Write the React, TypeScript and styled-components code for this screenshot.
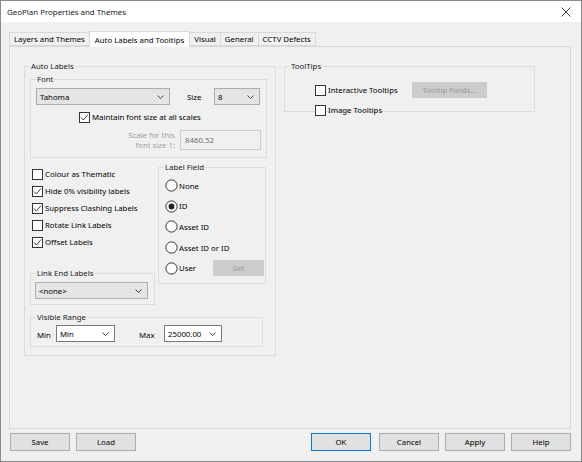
import React from "react";
import styled, { createGlobalStyle } from "styled-components";

const GlobalStyle = createGlobalStyle`
  html, body {
    margin: 0;
    padding: 0;
    background: #ffffff;
  }
  * {
    box-sizing: border-box;
  }
`;

const FONT = `"Noto Sans", "Liberation Sans", Arial, sans-serif`;

const Window = styled.div`
  width: 582px;
  height: 462px;
  display: flex;
  flex-direction: column;
  border: 1px solid #8a8a8a;
  font-family: ${FONT};
  font-size: 7.8px;
  color: #000;
  background: #f0f0f0;
  overflow: hidden;
`;

const TitleBar = styled.div`
  height: 21px;
  flex: none;
  display: flex;
  align-items: center;
  justify-content: space-between;
  padding: 0 6px 0 6px;
  background: #ffffff;
  font-size: 7.9px;
  color: #1a1a1a;
`;

const Body = styled.div`
  flex: 1;
  display: flex;
  flex-direction: column;
  padding: 10px 10px 9px 8px;
`;

const TabStrip = styled.div`
  display: flex;
  align-items: flex-end;
  height: 14px;
  padding-left: 1px;
  position: relative;
  z-index: 1;
`;

const Tab = styled.div<{ $active?: boolean }>`
  height: ${(p) => (p.$active ? "16px" : "14px")};
  display: flex;
  align-items: center;
  padding: 0 ${(p) => (p.$active ? "5px" : "4px")};
  border: 1px solid #d9d9d9;
  border-bottom: ${(p) => (p.$active ? "none" : "1px solid #d9d9d9")};
  margin-left: -1px;
  background: ${(p) => (p.$active ? "#ffffff" : "#f0f0f0")};
  white-space: nowrap;
  margin-bottom: ${(p) => (p.$active ? "-1px" : "0")};
`;

const TabPanel = styled.div`
  height: 383px;
  flex: none;
  border: 1px solid #d9d9d9;
  display: flex;
  align-items: flex-start;
  gap: 8px;
  padding: 14px 0 0 14px;
`;

const Group = styled.fieldset<{ $w?: number; $h?: number }>`
  margin: 0;
  padding: 0;
  width: ${(p) => (p.$w ? `${p.$w}px` : "auto")};
  height: ${(p) => (p.$h ? `${p.$h}px` : "auto")};
  border: 1px solid #dcdcdc;
  min-width: 0;
  display: flex;
  flex-direction: column;
`;

const Legend = styled.legend`
  padding: 0 1px;
  margin-left: 5px;
  line-height: 11px;
  color: #1a1a1a;
`;

const AutoInner = styled.div`
  display: flex;
  flex-direction: column;
  padding: 2px 8px 0 5px;
`;

const FontInner = styled.div`
  display: flex;
  flex-direction: column;
  padding: 3px 5px 0 5px;
`;

const Row = styled.div<{ $gap?: number }>`
  display: flex;
  align-items: center;
  gap: ${(p) => p.$gap ?? 0}px;
`;

const Combo = styled.div<{ $w: number; $editable?: boolean }>`
  width: ${(p) => p.$w}px;
  height: 17px;
  display: flex;
  align-items: center;
  justify-content: space-between;
  padding: 0 5px 0 3px;
  background: ${(p) => (p.$editable ? "#ffffff" : "#e5e5e5")};
  border: 1px solid ${(p) => (p.$editable ? "#7a7a7a" : "#adadad")};
  color: #000;
`;

const Chevron = () => (
  <svg width="7" height="4" viewBox="0 0 7 4">
    <path d="M0.5 0.5 L3.5 3.5 L6.5 0.5" fill="none" stroke="#333" strokeWidth="0.9" />
  </svg>
);

const Plain = styled.span<{ $w?: number; $color?: string }>`
  width: ${(p) => (p.$w ? `${p.$w}px` : "auto")};
  color: ${(p) => p.$color ?? "#000"};
  white-space: nowrap;
`;

const CheckRow = styled.label<{ $ml?: number; $w?: number }>`
  display: flex;
  align-items: center;
  height: 12px;
  width: ${(p) => (p.$w ? `${p.$w}px` : "auto")};
  flex: none;
  margin-left: ${(p) => p.$ml ?? 0}px;
  white-space: nowrap;
`;

const Box = styled.span`
  width: 11px;
  height: 11px;
  flex: none;
  border: 1px solid #333;
  background: #fff;
  display: flex;
  align-items: center;
  justify-content: center;
  margin-right: 2px;
`;

const Check = ({ checked, label, ml, w }: { checked?: boolean; label: string; ml?: number; w?: number }) => (
  <CheckRow $ml={ml} $w={w}>
    <Box>
      {checked && (
        <svg width="9" height="9" viewBox="0 0 9 9">
          <path d="M1 4.5 L3.4 7 L8 1.5" fill="none" stroke="#222" strokeWidth="0.9" />
        </svg>
      )}
    </Box>
    {label}
  </CheckRow>
);

const RadioRow = styled.label`
  display: flex;
  align-items: center;
  height: 13px;
  white-space: nowrap;
`;

const RadioMark = styled.svg`
  margin-right: 1px;
  flex: none;
`;

const Radio = ({ checked, label }: { checked?: boolean; label: string }) => (
  <RadioRow>
    <RadioMark width="13" height="13" viewBox="0 0 13 13">
      <circle cx="6.5" cy="6.5" r="5.6" fill="#fff" stroke="#333" strokeWidth="1" />
      {checked && <circle cx="6.5" cy="6.5" r="2.9" fill="#222" />}
    </RadioMark>
    {label}
  </RadioRow>
);

const TextBox = styled.div`
  width: 81px;
  height: 20px;
  display: flex;
  align-items: center;
  padding-left: 4px;
  background: #f0f0f0;
  border: 1px solid #cccccc;
  color: #6d6d6d;
`;

const ScaleLabel = styled.div`
  width: 144px;
  text-align: right;
  line-height: 10px;
  color: #a0a0a0;
  padding-right: 5px;
`;

const Button = styled.div<{ $w?: number; $disabled?: boolean; $default?: boolean }>`
  width: ${(p) => p.$w ?? 60}px;
  height: ${(p) => (p.$disabled ? 16 : 18)}px;
  display: flex;
  align-items: center;
  justify-content: center;
  background: ${(p) => (p.$disabled ? "#cccccc" : "#e1e1e1")};
  border: 1px solid ${(p) => (p.$disabled ? "#cccccc" : p.$default ? "#0078d7" : "#adadad")};
  color: ${(p) => (p.$disabled ? "#9a9a9a" : "#000")};
  flex: none;
`;

const Middle = styled.div`
  display: flex;
  gap: 3px;
  margin-top: 4px;
`;

const LeftCol = styled.div`
  display: flex;
  flex-direction: column;
  width: 125px;
`;

const CheckList = styled.div`
  display: flex;
  flex-direction: column;
  gap: 5px;
  padding-top: 6px;
`;

const RadioList = styled.div`
  display: flex;
  flex-direction: column;
  gap: 7.7px;
  padding: 6px 0 8px 6px;
`;

const UserRow = styled.div`
  display: flex;
  align-items: center;
  height: 13px;
`;

const GroupPad = styled.div<{ $p: string }>`
  display: flex;
  flex-direction: column;
  padding: ${(p) => p.$p};
`;

const Footer = styled.div`
  display: flex;
  align-items: center;
  gap: 6px;
  margin-top: 4px;
  padding-left: 1px;
`;

const Spacer = styled.div`
  flex: 1;
`;

export default function App() {
  return (
    <>
      <GlobalStyle />
      <Window>
        <TitleBar>
          <span>GeoPlan Properties and Themes</span>
          <svg width="10" height="10" viewBox="0 0 10 10" style={{ marginRight: 4 }}>
            <path d="M0.5 0.5 L9.5 9.5 M9.5 0.5 L0.5 9.5" stroke="#333" strokeWidth="0.9" />
          </svg>
        </TitleBar>
        <Body>
          <TabStrip>
            <Tab>Layers and Themes</Tab>
            <Tab $active>Auto Labels and Tooltips</Tab>
            <Tab>Visual</Tab>
            <Tab>General</Tab>
            <Tab>CCTV Defects</Tab>
          </TabStrip>
          <TabPanel>
            <Group $w={252} $h={295}>
              <Legend>Auto Labels</Legend>
              <AutoInner>
                <Group $h={84}>
                  <Legend>Font</Legend>
                  <FontInner>
                    <Row>
                      <Combo $w={134}>
                        Tahoma
                        <Chevron />
                      </Combo>
                      <Plain $w={27} style={{ marginLeft: 17 }}>
                        Size
                      </Plain>
                      <Combo $w={46}>
                        8
                        <Chevron />
                      </Combo>
                    </Row>
                    <Row style={{ marginTop: 6 }}>
                      <Check checked label="Maintain font size at all scales" ml={43} />
                    </Row>
                    <Row style={{ marginTop: 7 }}>
                      <ScaleLabel>
                        Scale for this
                        <br />
                        font size 1:
                      </ScaleLabel>
                      <TextBox>8460.52</TextBox>
                    </Row>
                  </FontInner>
                </Group>
                <Middle>
                  <LeftCol>
                    <CheckList>
                      <Check label="Colour as Thematic" ml={2} />
                      <Check checked label="Hide 0% visibility labels" ml={2} />
                      <Check checked label="Suppress Clashing Labels" ml={2} />
                      <Check label="Rotate Link Labels" ml={2} />
                      <Check checked label="Offset Labels" ml={2} />
                    </CheckList>
                    <Group $h={37} style={{ marginTop: 20 }}>
                      <Legend>Link End Labels</Legend>
                      <GroupPad $p="3px 0 0 4px">
                        <Combo $w={113}>
                          &lt;none&gt;
                          <Chevron />
                        </Combo>
                      </GroupPad>
                    </Group>
                  </LeftCol>
                  <Group $w={108} $h={122}>
                    <Legend>Label Field</Legend>
                    <RadioList>
                      <Radio label="None" />
                      <Radio checked label="ID" />
                      <Radio label="Asset ID" />
                      <Radio label="Asset ID or ID" />
                      <UserRow>
                        <Radio label="User" />
                        <Button $w={51} $disabled style={{ marginLeft: 17 }}>
                          Set
                        </Button>
                      </UserRow>
                    </RadioList>
                  </Group>
                </Middle>
                <Group $w={233} $h={35} style={{ marginTop: 7 }}>
                  <Legend>Visible Range</Legend>
                  <GroupPad $p="2px 0 0 6px">
                    <Row>
                      <Plain $w={19} style={{ marginTop: 3 }}>
                        Min
                      </Plain>
                      <Combo $w={59} $editable>
                        Min
                        <Chevron />
                      </Combo>
                      <Plain $w={25} style={{ marginTop: 3, marginLeft: 24 }}>
                        Max
                      </Plain>
                      <Combo $w={58} $editable>
                        25000.00
                        <Chevron />
                      </Combo>
                    </Row>
                  </GroupPad>
                </Group>
              </AutoInner>
            </Group>
            <Group $w={251} $h={51}>
              <Legend>ToolTips</Legend>
              <GroupPad $p="10px 0 0 30px">
                <Row>
                  <Check label="Interactive Tooltips" w={97} />
                  <Button $w={75} $disabled>
                    Tooltip Fields...
                  </Button>
                </Row>
                <Row style={{ marginTop: 6 }}>
                  <Check label="Image Tooltips" />
                </Row>
              </GroupPad>
            </Group>
          </TabPanel>
          <Footer>
            <Button>Save</Button>
            <Button>Load</Button>
            <Spacer />
            <Button $default>OK</Button>
            <Button style={{ marginLeft: 2 }}>Cancel</Button>
            <Button>Apply</Button>
            <Button>Help</Button>
          </Footer>
        </Body>
      </Window>
    </>
  );
}
